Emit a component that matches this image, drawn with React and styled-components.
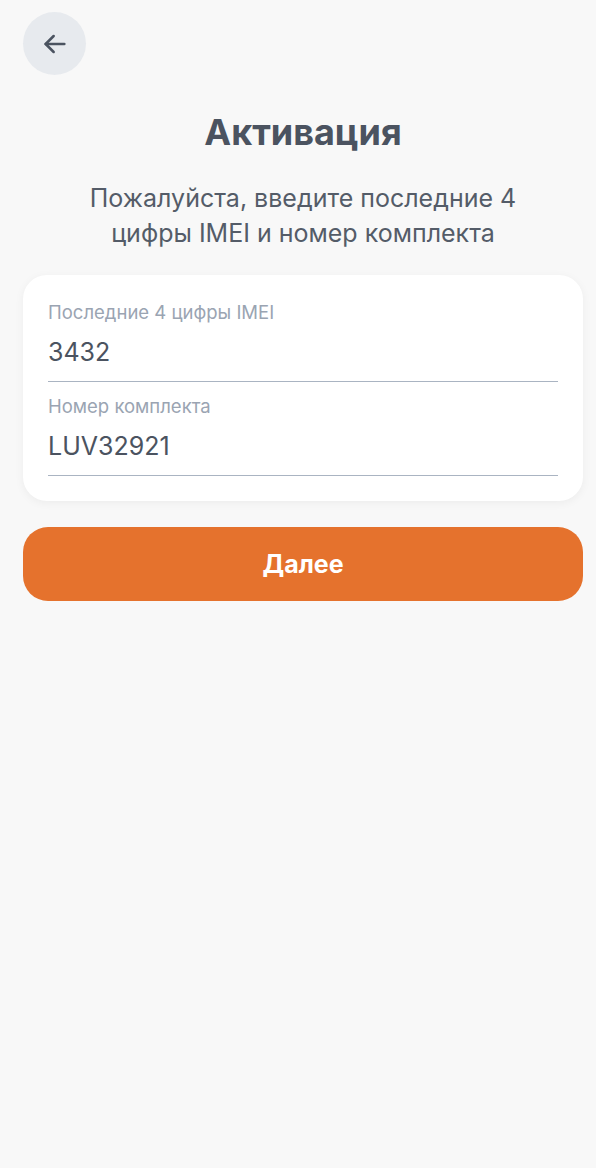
import React from 'react'
import styled, { createGlobalStyle } from 'styled-components'

const Global = createGlobalStyle`
    html, body {
        margin: 0;
        padding: 0;
        background: #f8f8f8;
        font-family: Inter, "Noto Sans", sans-serif;
    }
`

const Page = styled.div`
    min-height: 1168px;
    padding: 12px 13px 0 23px;
    box-sizing: border-box;
    display: flex;
    flex-direction: column;
`

const BackButton = styled.button`
    width: 63px;
    height: 63px;
    border-radius: 50%;
    border: none;
    background: #e7eaee;
    display: flex;
    align-items: center;
    justify-content: center;
    padding: 0;
    cursor: pointer;
`

const Title = styled.h1`
    margin: 36px 0 0 0;
    text-align: center;
    font-size: 36px;
    line-height: 42px;
    font-weight: 700;
    color: #4b5360;
`

const Subtitle = styled.p`
    margin: 28px auto 0 auto;
    max-width: 470px;
    text-align: center;
    font-size: 25px;
    line-height: 35px;
    color: #545c68;
`

const Card = styled.div`
    margin-top: 24px;
    background: #ffffff;
    border-radius: 24px;
    padding: 26px 25px 25px 25px;
    box-shadow: 0 2px 10px rgba(0, 0, 0, 0.05);
    display: flex;
    flex-direction: column;
    gap: 13px;
`

const Field = styled.label`
    display: flex;
    flex-direction: column;
    border-bottom: 1.5px solid #aab4c2;
`

const FieldLabel = styled.span`
    font-size: 18.5px;
    line-height: 22px;
    color: #9aa4b2;
`

const FieldValue = styled.input`
    border: none;
    outline: none;
    background: transparent;
    padding: 0;
    margin: 13px 0 13px 0;
    font-family: inherit;
    font-size: 25px;
    line-height: 32px;
    color: #4b5360;
`

const SubmitButton = styled.button`
    margin-top: 26px;
    height: 74px;
    border: none;
    border-radius: 25px;
    background: #e5722d;
    color: #ffffff;
    font-family: inherit;
    font-size: 25px;
    font-weight: 700;
    cursor: pointer;
`

function App() {
    return (
        <>
            <Global />
            <Page>
                <BackButton aria-label="Назад">
                    <svg width="32" height="32" viewBox="0 0 24 24" fill="none" stroke="#4b5360" strokeWidth="1.9" strokeLinecap="round" strokeLinejoin="round">
                        <path d="M19 12H5" />
                        <path d="M11 6l-6 6 6 6" />
                    </svg>
                </BackButton>
                <Title>Активация</Title>
                <Subtitle>Пожалуйста, введите последние 4 цифры IMEI и номер комплекта</Subtitle>
                <Card>
                    <Field>
                        <FieldLabel>Последние 4 цифры IMEI</FieldLabel>
                        <FieldValue defaultValue="3432" />
                    </Field>
                    <Field>
                        <FieldLabel>Номер комплекта</FieldLabel>
                        <FieldValue defaultValue="LUV32921" />
                    </Field>
                </Card>
                <SubmitButton>Далее</SubmitButton>
            </Page>
        </>
    )
}

export default App
